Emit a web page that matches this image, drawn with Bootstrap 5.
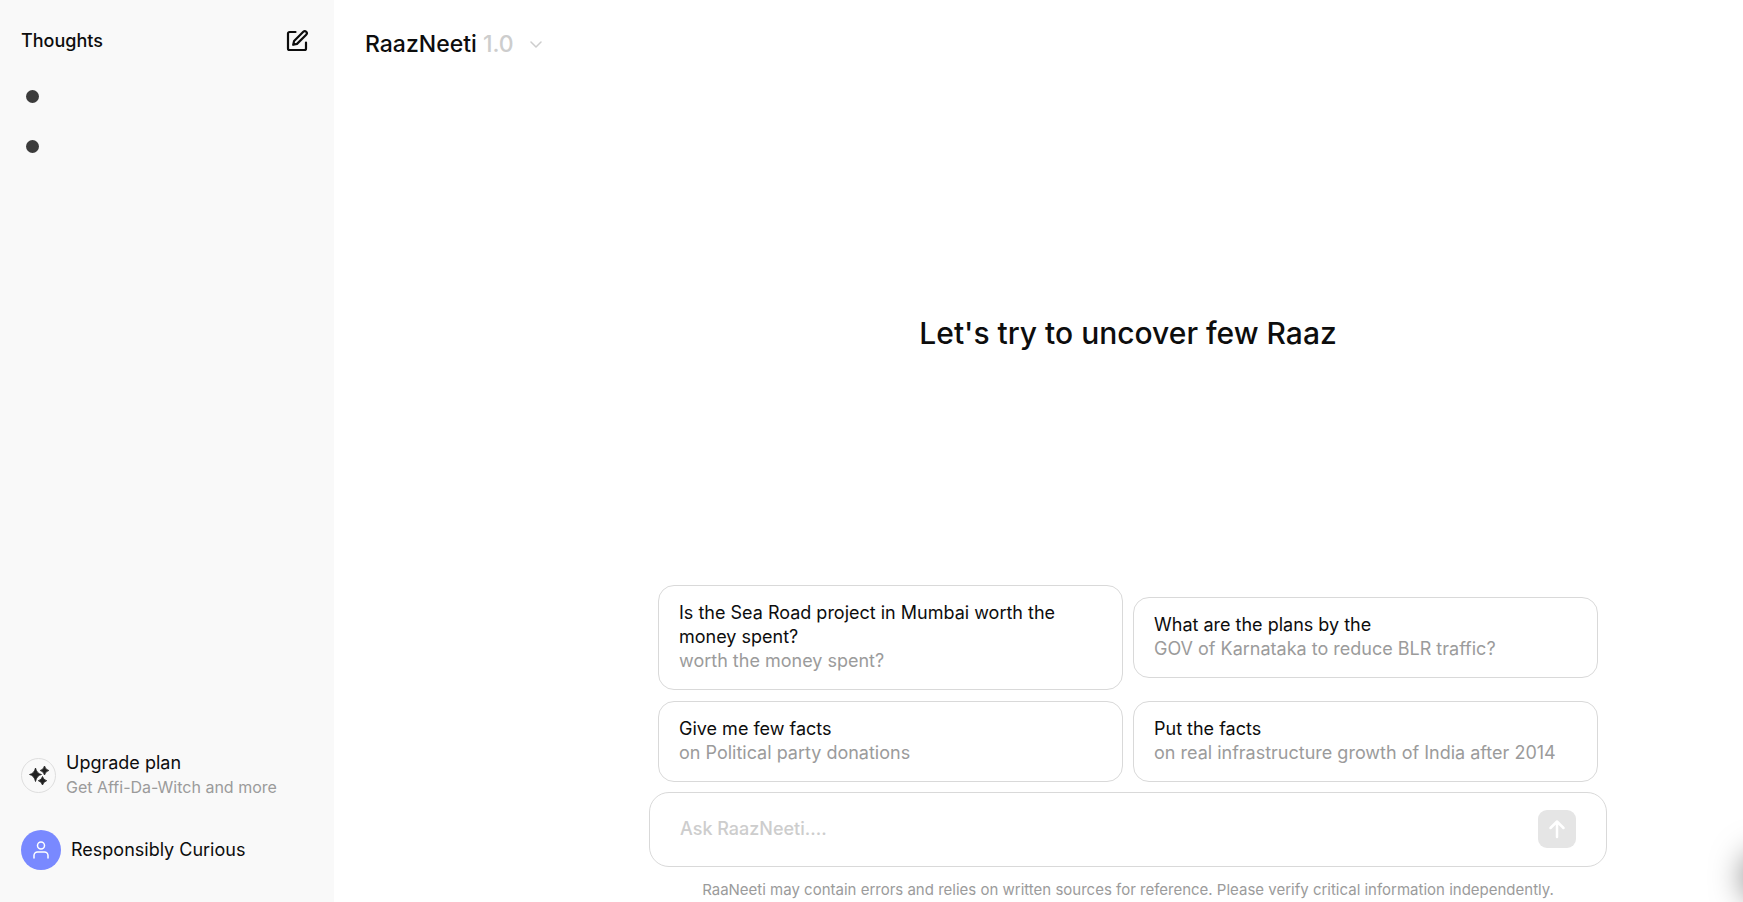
<!DOCTYPE html>
<html lang="en">
<head>
<meta charset="utf-8">
<meta name="viewport" content="width=device-width, initial-scale=1">
<title>RaazNeeti</title>
<link href="https://cdn.jsdelivr.net/npm/bootstrap@5.3.0/dist/css/bootstrap.min.css" rel="stylesheet">
<style>
  body { font-family: Inter, "Liberation Sans", sans-serif; font-size: 18px; line-height: 24px; color: #0d0d0d; background: #fff; }
  .btn { font-size: 18px; line-height: 24px; color: #0d0d0d; font-weight: 400; }
  .sidebar { width: 334px; background: #f9f9f9; padding: 28px 25px 32px 21px; }
  .sidebar h2 { font-size: 18px; line-height: 26px; font-weight: 500; }
  .thoughts { padding: 36px 0 0 5px; gap: 37px; }
  .thoughts a { width: 13px; height: 13px; background: #3c3c3c; }
  .plan-icon { width: 35px; height: 35px; border: 1px solid #dedede; }
  .plan-note { font-size: 16px; }
  .muted { color: #9b9b9b; }
  .avatar { width: 40px; height: 40px; background: #7989ff; }
  .upgrade { gap: 10px; margin-bottom: 31px; }
  .account { gap: 10px; }
  .topbar { padding: 27px 31px 19px; }
  .btn.brand { font-size: 23px; line-height: 34px; font-weight: 500; }
  .version { color: #cdcdcd; }
  .chat { width: 100%; max-width: 1137px; padding-left: 179px; }
  .greeting { font-size: 30px; line-height: 36px; }
  .prompts { display: grid; grid-template-columns: 1fr 1fr; gap: 11px 10px; padding: 0 9px; }
  .btn.prompt { border: 1px solid #d9d9d9; border-radius: 16px; padding: 15px 20px 16px; }
  .ask { border: 1px solid #d9d9d9; border-radius: 20px; padding: 17px 30px 18px; margin-top: 10px; }
  .ask input { font-size: 18px; line-height: 26px; font-weight: 500; }
  .ask input::placeholder { color: #cdcdcd; opacity: 1; }
  .btn.send { width: 38px; height: 38px; border-radius: 9px; background: #e5e5e5; }
  .notice { font-size: 15px; line-height: 24px; margin-top: 11px; }
  .tucked { left: 100%; bottom: 0; width: 50px; height: 50px; border-radius: 25px; box-shadow: 0 0 32px rgba(0,0,0,.5); }
</style>
</head>
<body>
<div class="d-flex min-vh-100">
  <aside class="sidebar d-flex flex-column flex-shrink-0">
    <div class="d-flex justify-content-between align-items-center">
      <h2 class="m-0">Thoughts</h2>
      <button type="button" class="btn p-0 border-0 d-flex" aria-label="New thought">
        <svg width="24" height="24" viewBox="0 0 24 24" fill="none" stroke="#0d0d0d" stroke-width="2.200" stroke-linecap="round" stroke-linejoin="round"><path d="M10.500 3H4.500A1.500 1.500 0 0 0 3 4.500v15A1.500 1.500 0 0 0 4.500 21h15a1.500 1.500 0 0 0 1.500-1.500V13.500"/><path d="M18.300 2.800a1.900 1.900 0 0 1 2.900 2.900l-9.200 9.200-3.800.9.900-3.800z"/></svg>
      </button>
    </div>
    <nav class="thoughts d-flex flex-column" aria-label="Thoughts">
      <a href="#" class="rounded-circle" aria-label="Thought 1"></a>
      <a href="#" class="rounded-circle" aria-label="Thought 2"></a>
    </nav>
    <div class="mt-auto d-flex flex-column">
      <button type="button" class="btn p-0 border-0 d-flex align-items-center text-start upgrade">
        <span class="plan-icon rounded-circle d-flex align-items-center justify-content-center flex-shrink-0">
          <svg width="22" height="22" viewBox="0 0 22 22" fill="#212121" stroke="#212121" stroke-width=".8" stroke-linejoin="round"><path d="M7.500 4q1.300 5.500 6 6.500-4.700 1-6 7-1.300-6-6-7 4.700-1 6-6.500z"/><path d="M16.500 2q.9 3.600 4.300 4.500-3.400.9-4.300 4.500-.9-3.600-4.300-4.500 3.400-.9 4.300-4.500z"/><path d="M14.500 12.500q.9 3.400 4.200 4.200-3.300.9-4.200 4.300-.9-3.400-4.200-4.300 3.300-.8 4.200-4.200z"/></svg>
        </span>
        <span>
          <span class="d-block">Upgrade plan</span>
          <span class="plan-note muted d-block">Get Affi-Da-Witch and more</span>
        </span>
      </button>
      <button type="button" class="btn p-0 border-0 d-flex align-items-center account">
        <span class="avatar rounded-circle d-flex align-items-center justify-content-center">
          <svg width="20" height="20" viewBox="0 0 20 20" fill="none" stroke="#fff" stroke-width="1.500" stroke-linecap="round"><circle cx="10" cy="5.500" r="3.500"/><path d="M3 18v-2.500a3.500 3.500 0 0 1 3.500-3.500h7a3.500 3.500 0 0 1 3.500 3.500V18"/></svg>
        </span>
        <span>Responsibly Curious</span>
      </button>
    </div>
  </aside>

  <main class="d-flex flex-column flex-grow-1">
    <header class="topbar d-flex">
      <button type="button" class="brand btn p-0 border-0 d-flex align-items-center">
        <span>RaazNeeti <span class="version">1.0</span></span>
        <svg class="ms-3" width="12" height="12" viewBox="0 0 12 12" fill="none" stroke="#cdcdcd" stroke-width="1.500" stroke-linecap="round" stroke-linejoin="round"><path d="M1 4l5 5 5-5"/></svg>
      </button>
    </header>
    <section class="chat d-flex flex-column flex-grow-1 mx-auto">
      <div class="flex-grow-1 d-flex align-items-center justify-content-center">
        <h1 class="greeting m-0">Let's try to uncover few Raaz</h1>
      </div>
      <div class="prompts align-items-center">
        <button type="button" class="prompt btn text-start"><span class="d-block">Is the Sea Road project in Mumbai worth the money spent?</span><span class="d-block muted">worth the money spent?</span></button>
        <button type="button" class="prompt btn text-start"><span class="d-block">What are the plans by the</span><span class="d-block muted">GOV of Karnataka to reduce BLR traffic?</span></button>
        <button type="button" class="prompt btn text-start"><span class="d-block">Give me few facts</span><span class="d-block muted">on Political party donations</span></button>
        <button type="button" class="prompt btn text-start"><span class="d-block">Put the facts</span><span class="d-block muted">on real infrastructure growth of India after 2014</span></button>
      </div>
      <form class="ask d-flex align-items-center">
        <input type="text" class="form-control border-0 p-0 shadow-none bg-transparent" placeholder="Ask RaazNeeti...." aria-label="Ask RaazNeeti">
        <button type="submit" class="send btn border-0 p-0 d-flex align-items-center justify-content-center flex-shrink-0" aria-label="Send">
          <svg width="20" height="20" viewBox="0 0 20 20" fill="none" stroke="#fff" stroke-width="2.500" stroke-linecap="round" stroke-linejoin="round"><path d="M10 18V2.500M3.500 9L10 2.500 16.500 9"/></svg>
        </button>
      </form>
      <p class="notice muted text-center mb-0">RaaNeeti may contain errors and relies on written sources for reference. Please verify critical information independently.</p>
    </section>
  </main>
</div>
<div class="tucked position-fixed" aria-hidden="true"></div>
<script src="https://cdn.jsdelivr.net/npm/bootstrap@5.3.0/dist/js/bootstrap.bundle.min.js"></script>
</body>
</html>
